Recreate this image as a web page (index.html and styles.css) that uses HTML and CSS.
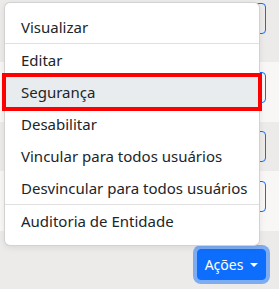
FILE: index.html
```html
<!DOCTYPE html>
<html lang="pt-BR">
<head>
    <meta charset="UTF-8">
    <meta name="viewport" content="width=device-width, initial-scale=1.0">
    <title>Ações</title>
    <link rel="stylesheet" href="styles.css">
</head>
<body>

<div id="page">
    <!-- these buttons sit under the open menu, only their right edge shows -->
    <div class="grid-row row-odd row-first">
        <button class="btn btn-outline" aria-label="Ações"><span class="caret"></span></button>
    </div>
    <div class="grid-row row-even">
        <button class="btn btn-outline" aria-label="Ações"><span class="caret"></span></button>
    </div>
    <div class="grid-row row-odd row-short">
        <button class="btn btn-outline" aria-label="Ações"><span class="caret"></span></button>
    </div>
    <div class="grid-row row-even">
        <button class="btn btn-outline" aria-label="Ações"><span class="caret"></span></button>
    </div>
    <div class="grid-row row-odd row-last">
        <button class="btn btn-primary btn-focus">Ações <span class="caret"></span></button>
    </div>

    <ul class="dropdown-menu">
        <li><a class="dropdown-item" href="#">Visualizar</a></li>
        <li class="dropdown-divider"></li>
        <li><a class="dropdown-item" href="#">Editar</a></li>
        <li><a class="dropdown-item active-item" href="#">Segurança</a></li>
        <li><a class="dropdown-item" href="#">Desabilitar</a></li>
        <li><a class="dropdown-item" href="#">Vincular para todos usuários</a></li>
        <li><a class="dropdown-item" href="#">Desvincular para todos usuários</a></li>
        <li class="dropdown-divider"></li>
        <li><a class="dropdown-item" href="#">Auditoria de Entidade</a></li>
    </ul>
</div>

</body>
</html>
```

FILE: styles.css
```css
:root {
    --primary: #0d6efd;
    --row-odd: #ecebe9;
    --row-even: #f8f7f6;
    --text: #212529;
}

body {
    margin: 0;
    font-family: "Noto Sans", "Open Sans", sans-serif;
    color: var(--text);
    background-color: var(--row-odd);
}

#page {
    position: relative;
    height: 289px;
    overflow: hidden;
}

.grid-row {
    display: flex;
    justify-content: flex-end;
    align-items: flex-start;
    padding: 9px 13px 0 0;
    height: 60px;
    box-sizing: border-box;
}

.row-odd {
    background-color: var(--row-odd);
}

.row-even {
    background-color: var(--row-even);
    padding-top: 10px;
}

.row-first {
    height: 62px;
    padding-top: 3px;
}

.row-short {
    height: 49px;
}

.row-last {
    height: 58px;
    padding-top: 18px;
}

.btn {
    display: inline-flex;
    align-items: center;
    justify-content: center;
    width: 69px;
    height: 31px;
    padding: 0 8px;
    border-radius: 4px;
    font-family: inherit;
    font-size: 14px;
    cursor: pointer;
}

.btn-outline {
    background-color: transparent;
    border: 1px solid var(--primary);
    color: var(--primary);
}

.btn-primary {
    background-color: var(--primary);
    border: 1px solid var(--primary);
    color: #ffffff;
}

.btn-focus {
    box-shadow: 0 0 0 4px rgba(13, 110, 253, 0.5);
}

.caret {
    display: inline-block;
    margin-left: 7px;
    border-top: 4px solid currentColor;
    border-left: 4px solid transparent;
    border-right: 4px solid transparent;
}

/* menu opened from the last row, lies over the table */
.dropdown-menu {
    position: absolute;
    left: 4px;
    top: 2px;
    width: 256px;
    margin: 0;
    padding: 8px 0;
    list-style: none;
    background-color: #ffffff;
    border: 1px solid rgba(0, 0, 0, 0.175);
    border-radius: 6px;
    box-shadow: 0 2px 6px rgba(0, 0, 0, 0.08);
    box-sizing: border-box;
}

.dropdown-item {
    display: block;
    padding: 4px 16px;
    line-height: 24px;
    font-size: 15px;
    color: var(--text);
    text-decoration: none;
    white-space: nowrap;
}

.active-item {
    background-color: #e9ecef;
    outline: 4px solid #ff0000;
    outline-offset: -1px;
}

.dropdown-divider {
    height: 0;
    border-top: 1px solid rgba(0, 0, 0, 0.12);
}
```
